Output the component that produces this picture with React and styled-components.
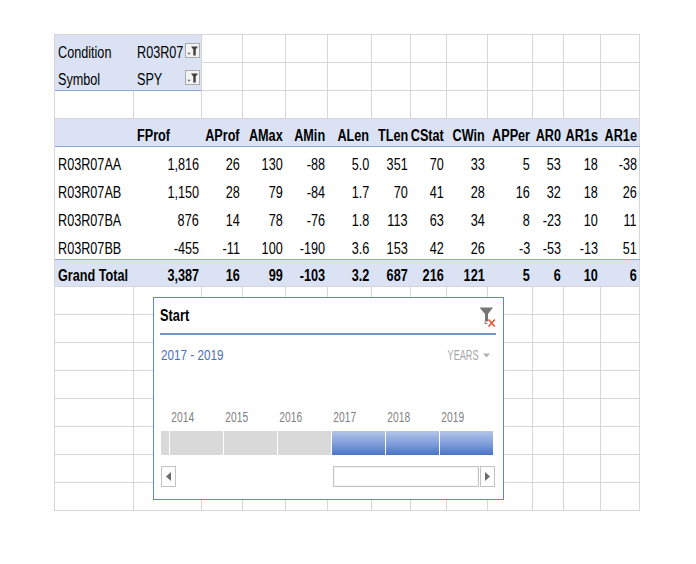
import React from 'react';
import styled, { createGlobalStyle, css } from 'styled-components';

const GlobalStyle = createGlobalStyle`
  html, body { margin: 0; padding: 0; background: #ffffff; }
  body { font-family: "Liberation Sans", Arial, sans-serif; color: #000; }
`;

const COLS = '79px 68px 41px 43px 42px 44px 39px 36px 41px 45px 31px 37px 39px';
const GRID = '#d6d6d6';
const PIVOT_FILL = '#dae2f3';
const PIVOT_LINE = '#8eaadb';

const Sheet = styled.div`
  position: relative;
  margin: 34px 0 0 54px;
  width: 585px;
  border-left: 1px solid ${GRID};
  border-top: 1px solid ${GRID};
  font-size: 16px;
`;

const Row = styled.div`
  display: grid;
  grid-template-columns: ${COLS};
  height: 28px;
  box-sizing: border-box;
  ${p => p.$kind === 'header' && css`
    background: ${PIVOT_FILL};
    border-bottom: 1px solid ${PIVOT_LINE};
    font-weight: bold;
    box-shadow: inset -1px 0 ${GRID};
  `}
  ${p => p.$kind === 'data' && css`
    box-shadow: inset -1px 0 ${GRID};
  `}
  ${p => p.$kind === 'total' && css`
    background: ${PIVOT_FILL};
    border-top: 1px solid ${PIVOT_LINE};
    border-bottom: 1px solid ${GRID};
    font-weight: bold;
    box-shadow: inset -1px 0 ${GRID};
  `}
`;

const Cell = styled.div`
  display: flex;
  align-items: flex-end;
  justify-content: ${p => (p.$right ? 'flex-end' : 'flex-start')};
  padding: 0 ${p => (p.$right ? '3px' : p.$spread ? '1px' : '0')} 2px ${p => (p.$right ? '0' : '3px')};
  box-sizing: border-box;
  white-space: nowrap;
  line-height: 16px;
  min-width: 0;
  ${p => p.$grid && css`
    border-right: 1px solid ${GRID};
    border-bottom: 1px solid ${GRID};
  `}
  ${p => p.$fill && css`
    background: ${PIVOT_FILL};
  `}
  ${p => p.$edge && css`
    border-right: 1px solid ${GRID};
  `}
  ${p => p.$underline && css`
    border-bottom: 1px solid ${PIVOT_LINE};
  `}
`;

const Squeeze = styled.span`
  display: inline-block;
  white-space: nowrap;
  transform: scaleX(${p => p.$sx || 1});
  transform-origin: ${p => p.$origin || 'left'} center;
`;

const FilterValue = styled(Squeeze)`
  flex: 1 1 0;
  min-width: 0;
`;

const FilterBtn = styled.span`
  width: 15px;
  height: 15px;
  flex: none;
  box-sizing: border-box;
  border: 1px solid #a9a9a9;
  background: #f3f3f3;
  display: flex;
  align-items: center;
  justify-content: center;
  margin-bottom: 3px;
`;

/* ---------- Slicer ---------- */

const Slicer = styled.div`
  position: absolute;
  left: 98px;
  top: 262px;
  width: 351px;
  height: 203px;
  box-sizing: border-box;
  border: 1px solid #5f86d1;
  background: #fff;
  display: flex;
  flex-direction: column;
  z-index: 2;
`;

const SlicerHeader = styled.div`
  height: 35px;
  margin: 0 7px 0 6px;
  border-bottom: 2px solid #6f93d6;
  display: flex;
  align-items: center;
  justify-content: space-between;
`;

const Title = styled(Squeeze)`
  font-size: 16px;
  font-weight: bold;
  line-height: 20px;
  color: #000;
`;

const ClearIcon = styled.svg`
  align-self: flex-start;
  margin-top: 8px;
`;

const RangeRow = styled.div`
  height: 40px;
  margin: 0 13px 0 7px;
  display: flex;
  align-items: center;
  justify-content: space-between;
`;

const RangeText = styled(Squeeze)`
  font-size: 15px;
  line-height: 20px;
  color: #4a70bb;
`;

const LevelPick = styled.div`
  display: flex;
  align-items: center;
  gap: 5px;
`;

const LevelText = styled(Squeeze)`
  font-size: 14px;
  line-height: 20px;
  color: #a6a6a6;
`;

const Timeline = styled.div`
  margin: 32px 8px 0 7px;
  display: flex;
  flex-direction: column;
`;

const Periods = styled.div`
  display: grid;
  grid-template-columns: 8px repeat(6, 53px);
  column-gap: 1px;
  height: ${p => p.$h}px;
  margin-top: ${p => p.$mt || 0}px;
  align-items: center;
`;

const YearLabel = styled(Squeeze)`
  font-size: 15px;
  line-height: 20px;
  color: #7f7f7f;
  padding-left: 2px;
`;

const Segment = styled.div`
  height: 100%;
  background: ${p => (p.$on ? 'linear-gradient(#b3c5e8, #7e9cd9 55%, #4a74c6)' : '#d9d9d9')};
`;

const ScrollBar = styled.div`
  display: flex;
  height: 21px;
  margin-top: 11px;
`;

const ScrollBtn = styled.div`
  width: 15px;
  box-sizing: border-box;
  border: 1px solid #c4c4c4;
  background: #fdfdfd;
  display: flex;
  align-items: center;
  justify-content: center;
`;

const Track = styled.div`
  flex: 1;
  display: flex;
  justify-content: flex-end;
`;

const Thumb = styled.div`
  width: 146px;
  margin-right: 1px;
  box-sizing: border-box;
  border: 1px solid #c4c4c4;
  box-shadow: inset 0 0 0 1px #f4f4f4;
  background: #fff;
`;

/* ---------- icons ---------- */

const FunnelSmall = () => (
  <svg width="13" height="13" viewBox="0 0 13 13">
    <path d="M1.3 8.8 H4.7 L3 10.8 Z" fill="#6a6a6a" />
    <path d="M5 2.5 H12 L9.7 5.6 V11.6 H7.3 V5.6 Z" fill="#3f3f3f" />
  </svg>
);

const ClearFilter = () => (
  <ClearIcon width="17" height="23" viewBox="0 0 17 23">
    <path d="M0.5 1.5 H14 L9 8 V15.5 H6 V8 Z" fill="#767676" />
    <path d="M6 15.5 V17.5 H8.5" stroke="#767676" strokeWidth="1" fill="none" />
    <path d="M9.5 13.5 L15.8 20.5 M15.8 13.5 L9.5 20.5" stroke="#e4573b" strokeWidth="1.7" />
  </ClearIcon>
);

const Caret = () => (
  <svg width="7" height="5" viewBox="0 0 7 5">
    <path d="M0 0.5 H7 L3.5 4.5 Z" fill="#b0b0b0" />
  </svg>
);

const ArrowLeft = () => (
  <svg width="5" height="9" viewBox="0 0 5 9">
    <path d="M5 0 V9 L0 4.5 Z" fill="#6b6b6b" />
  </svg>
);

const ArrowRight = () => (
  <svg width="5" height="9" viewBox="0 0 5 9">
    <path d="M0 0 V9 L5 4.5 Z" fill="#6b6b6b" />
  </svg>
);

/* ---------- data ---------- */

const SX = 0.79;

const HEADERS = ['FProf', 'AProf', 'AMax', 'AMin', 'ALen', 'TLen', 'CStat', 'CWin', 'APPer', 'AR0', 'AR1s', 'AR1e'];

const DATA = [
  ['R03R07AA', ['1,816', '26', '130', '-88', '5.0', '351', '70', '33', '5', '53', '18', '-38']],
  ['R03R07AB', ['1,150', '28', '79', '-84', '1.7', '70', '41', '28', '16', '32', '18', '26']],
  ['R03R07BA', ['876', '14', '78', '-76', '1.8', '113', '63', '34', '8', '-23', '10', '11']],
  ['R03R07BB', ['-455', '-11', '100', '-190', '3.6', '153', '42', '26', '-3', '-53', '-13', '51']],
];

const TOTAL = ['3,387', '16', '99', '-103', '3.2', '687', '216', '121', '5', '6', '10', '6'];

const FILTERS = [
  ['Condition', 'R03R07', false],
  ['Symbol', 'SPY', true],
];

const YEARS = [
  { y: '2014', on: false },
  { y: '2015', on: false },
  { y: '2016', on: false },
  { y: '2017', on: true },
  { y: '2018', on: true },
  { y: '2019', on: true },
];

const TextCell = ({ right, children, ...rest }) => (
  <Cell $right={right} {...rest}>
    <Squeeze $sx={SX} $origin={right ? 'right' : 'left'}>{children}</Squeeze>
  </Cell>
);

const EmptyRow = () => (
  <Row>
    {Array.from({ length: 13 }).map((_, i) => (
      <Cell key={i} $grid />
    ))}
  </Row>
);

export default function App() {
  return (
    <>
      <GlobalStyle />
      <Sheet>
        {FILTERS.map(([label, value, underline]) => (
          <Row key={label}>
            <TextCell $fill $underline={underline}>{label}</TextCell>
            <Cell $fill $spread $edge $underline={underline}>
              <FilterValue $sx={SX}>{value}</FilterValue>
              <FilterBtn>
                <FunnelSmall />
              </FilterBtn>
            </Cell>
            {Array.from({ length: 11 }).map((_, i) => (
              <Cell key={i} $grid />
            ))}
          </Row>
        ))}
        <EmptyRow />
        <Row $kind="header">
          <Cell />
          {HEADERS.map((h, i) => (
            <TextCell key={h} right={i > 0}>{h}</TextCell>
          ))}
        </Row>
        {DATA.map(([name, vals]) => (
          <Row key={name} $kind="data">
            <TextCell>{name}</TextCell>
            {vals.map((v, i) => (
              <TextCell key={i} right>{v}</TextCell>
            ))}
          </Row>
        ))}
        <Row $kind="total">
          <TextCell>Grand Total</TextCell>
          {TOTAL.map((v, i) => (
            <TextCell key={i} right>{v}</TextCell>
          ))}
        </Row>
        {Array.from({ length: 8 }).map((_, i) => (
          <EmptyRow key={i} />
        ))}

        <Slicer>
          <SlicerHeader>
            <Title $sx={0.8}>Start</Title>
            <ClearFilter />
          </SlicerHeader>
          <RangeRow>
            <RangeText $sx={0.78}>2017 - 2019</RangeText>
            <LevelPick>
              <LevelText $sx={0.65} $origin="right">YEARS</LevelText>
              <Caret />
            </LevelPick>
          </RangeRow>
          <Timeline>
            <Periods $h={20}>
              <span />
              {YEARS.map(({ y }) => (
                <YearLabel key={y} $sx={0.68}>{y}</YearLabel>
              ))}
            </Periods>
            <Periods $h={24} $mt={4}>
              <Segment />
              {YEARS.map(({ y, on }) => (
                <Segment key={y} $on={on} />
              ))}
            </Periods>
            <ScrollBar>
              <ScrollBtn>
                <ArrowLeft />
              </ScrollBtn>
              <Track>
                <Thumb />
              </Track>
              <ScrollBtn>
                <ArrowRight />
              </ScrollBtn>
            </ScrollBar>
          </Timeline>
        </Slicer>
      </Sheet>
    </>
  );
}
